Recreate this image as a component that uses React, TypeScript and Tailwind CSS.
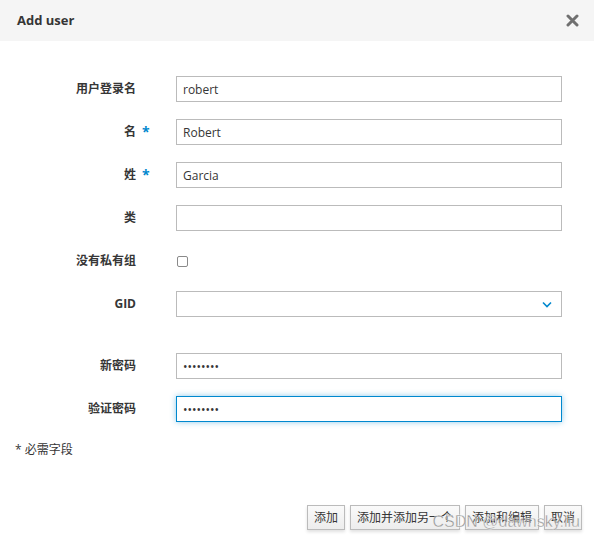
import React from "react";

const font = { fontFamily: '"Open Sans", "Noto Sans CJK SC", sans-serif' };

type Row = {
  label: string;
  required?: boolean;
  value?: string;
  kind?: "text" | "password" | "checkbox" | "select";
  focused?: boolean;
};

const rows: Row[] = [
  { label: "用户登录名", value: "robert" },
  { label: "名", required: true, value: "Robert" },
  { label: "姓", required: true, value: "Garcia" },
  { label: "类", value: "" },
  { label: "没有私有组", kind: "checkbox" },
  { label: "GID", kind: "select" },
];

const pwRows: Row[] = [
  { label: "新密码", kind: "password", value: "robert12" },
  { label: "验证密码", kind: "password", value: "robert12", focused: true },
];

function Field({ row }: { row: Row }) {
  const base =
    "w-[386px] h-[26px] border bg-white px-[6px] text-[12px] text-[#363636] outline-none";
  if (row.kind === "checkbox") {
    return (
      <div className="h-[26px] flex items-center pl-[1px]">
        <div className="w-[11px] h-[11px] border border-[#8a8a8a] rounded-[2px] bg-white" />
      </div>
    );
  }
  if (row.kind === "select") {
    return (
      <div className={`${base} border-[#bbb] flex items-center justify-end pr-[9px]`}>
        <svg width="10" height="7" viewBox="0 0 10 7">
          <path d="M1 1.5 L5 5.5 L9 1.5" fill="none" stroke="#0088ce" strokeWidth="1.6" />
        </svg>
      </div>
    );
  }
  return (
    <input
      readOnly
      type={row.kind === "password" ? "password" : "text"}
      defaultValue={row.value}
      style={font}
      className={`${base} ${
        row.focused
          ? "border-[#0088ce] shadow-[0_0_6px_rgba(0,136,206,0.45)]"
          : "border-[#bbb]"
      }`}
    />
  );
}

function FormRow({ row }: { row: Row }) {
  return (
    <div className="flex items-center">
      <div className="w-[136px] text-right text-[12px] font-bold text-[#363636]">
        {row.label}
      </div>
      <div className="w-[40px] pl-[6px] text-[14px] font-bold text-[#0088ce] leading-none">
        {row.required ? "*" : ""}
      </div>
      <Field row={row} />
    </div>
  );
}

export default function App() {
  return (
    <div
      style={font}
      className="relative w-[594px] h-[543px] bg-white overflow-hidden text-[#363636]"
    >
      <div className="h-[41px] bg-[#f5f5f5] flex items-center justify-between pl-[17px] pr-[15px]">
        <div className="text-[13px] font-bold text-[#363636]">Add user</div>
        <svg width="13" height="13" viewBox="0 0 13 13">
          <path d="M2 2 L11 11 M11 2 L2 11" stroke="#707070" strokeWidth="3" strokeLinecap="round" />
        </svg>
      </div>

      <div className="pt-[35px] flex flex-col gap-[17px]">
        {rows.map((r) => (
          <FormRow key={r.label} row={r} />
        ))}
      </div>
      <div className="pt-[36px] flex flex-col gap-[17px]">
        {pwRows.map((r) => (
          <FormRow key={r.label} row={r} />
        ))}
      </div>

      <div className="mt-[19px] pl-[15px] text-[12px] text-[#363636]">* 必需字段</div>

      <div className="mt-[46px] flex justify-end gap-[5px] pr-[12px]">
        {["添加", "添加并添加另一个", "添加和编辑", "取消"].map((b) => (
          <button
            key={b}
            style={font}
            className="h-[25px] px-[6px] text-[12px] text-[#363636] border border-[#bbb] bg-gradient-to-b from-[#fafafa] to-[#ededed] shadow-[0_2px_3px_rgba(0,0,0,0.12)]"
          >
            {b}
          </button>
        ))}
      </div>

      <div
        className="absolute right-[14px] bottom-[9px] text-[16px] text-[#777]/75 pointer-events-none"
        style={{ fontFamily: '"Liberation Sans", sans-serif', WebkitTextStroke: "0.3px #fff" }}
      >
        CSDN @dawnsky.liu
      </div>
    </div>
  );
}
